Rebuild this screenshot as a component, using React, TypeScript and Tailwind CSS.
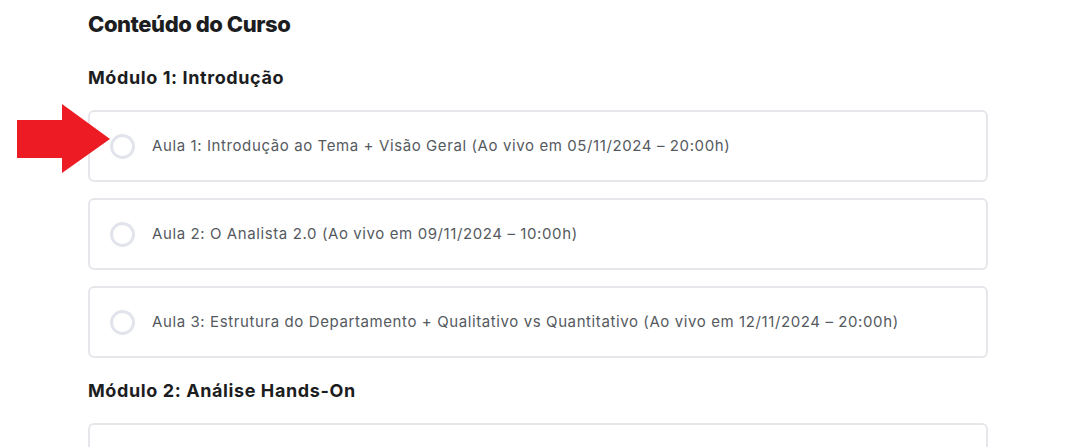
import React from "react";

const modules = [
  {
    title: "Módulo 1: Introdução",
    lessons: [
      "Aula 1: Introdução ao Tema + Visão Geral (Ao vivo em 05/11/2024 – 20:00h)",
      "Aula 2: O Analista 2.0 (Ao vivo em 09/11/2024 – 10:00h)",
      "Aula 3: Estrutura do Departamento + Qualitativo vs Quantitativo (Ao vivo em 12/11/2024 – 20:00h)",
    ],
  },
  {
    title: "Módulo 2: Análise Hands-On",
    lessons: [""],
  },
];

function Lesson({ text, arrow }: { text: string; arrow?: boolean }) {
  return (
    <div className="relative flex h-[72px] items-center rounded-[6px] border-2 border-[#e5e7eb] bg-white pl-[20px]">
      {text && (
        <>
          <span className="h-[25px] w-[25px] shrink-0 rounded-full border-[3px] border-[#e1e4ea]" />
          <span className="ml-[17px] text-[15px] tracking-[0.6px] text-[#555a60]">{text}</span>
        </>
      )}
      {arrow && (
        <svg
          className="absolute left-[-73px] top-[-8px]"
          width="96"
          height="72"
          viewBox="0 0 96 72"
        >
          <polygon points="0,16 45,16 45,0 93,35 45,69 45,54 0,54" fill="#ed1c24" />
        </svg>
      )}
    </div>
  );
}

export default function App() {
  return (
    <div className="min-h-[447px] bg-white pl-[88px] pt-[8px]" style={{ fontFamily: "Inter, 'Noto Sans', sans-serif" }}>
      <div className="w-[900px]">
        <h2 className="text-[22px] font-extrabold leading-[32px] tracking-[-0.45px] text-[#1c1d21]">Conteúdo do Curso</h2>
        {modules.map((m, i) => (
          <div key={i} className={i === 0 ? "mt-[25px]" : "mt-[20px]"}>
            <h3 className="text-[18px] font-bold leading-[26px] tracking-[0.6px] text-[#1c1d21]">{m.title}</h3>
            <div className="mt-[19px] flex flex-col gap-[16px]">
              {m.lessons.map((l, j) => (
                <Lesson key={j} text={l} arrow={i === 0 && j === 0} />
              ))}
            </div>
          </div>
        ))}
      </div>
    </div>
  );
}
